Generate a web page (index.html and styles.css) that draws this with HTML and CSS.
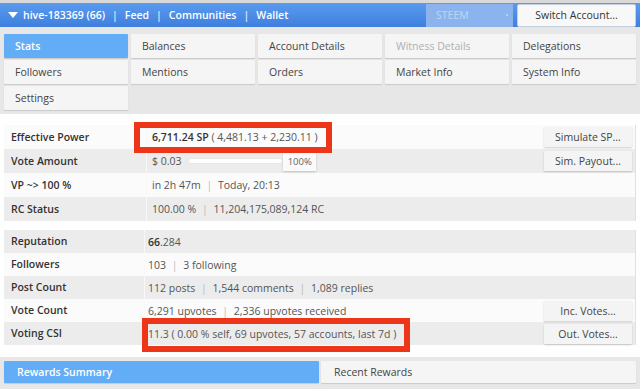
FILE: index.html
```html
<!DOCTYPE html>
<html>
<head>
  <meta charset="utf-8">
  <meta name="viewport" content="width=device-width">
  <title>hive-183369 - Stats</title>
  <link rel="stylesheet" href="styles.css">
</head>
<body>
  <header class="bar">
    <div class="bar-links">
      <svg class="caret" width="10" height="6" viewBox="0 0 10 6"><path d="M0 0 L10 0 L5 6 Z" fill="#fff"/></svg>
      <span>hive-183369 (66)</span><span class="sep">|</span>
      <span>Feed</span><span class="sep">|</span>
      <span>Communities</span><span class="sep">|</span>
      <span>Wallet</span>
    </div>
    <div class="chain">STEEM <span class="dot"></span></div>
    <div class="switch">Switch Account...</div>
  </header>

  <nav class="tabs">
    <div class="tab active">Stats</div>
    <div class="tab">Balances</div>
    <div class="tab">Account Details</div>
    <div class="tab disabled">Witness Details</div>
    <div class="tab">Delegations</div>
    <div class="tab">Followers</div>
    <div class="tab">Mentions</div>
    <div class="tab">Orders</div>
    <div class="tab">Market Info</div>
    <div class="tab">System Info</div>
    <div class="tab">Settings</div>
  </nav>

  <section class="stats">
    <div class="table first">
      <div class="row">
        <div class="label">Effective Power</div>
        <div class="value"><b>6,711.24 SP</b> ( 4,481.13 + 2,230.11 )</div>
        <div class="act"><button>Simulate SP...</button></div>
      </div>
      <div class="row alt">
        <div class="label">Vote Amount</div>
        <div class="value">$ 0.03 <span class="track"></span><span class="thumb">100%</span></div>
        <div class="act"><button>Sim. Payout...</button></div>
      </div>
      <div class="row">
        <div class="label">VP ~&gt; 100 %</div>
        <div class="value">in 2h 47m <span class="pipe">|</span> Today, 20:13</div>
        <div class="act"></div>
      </div>
      <div class="row alt">
        <div class="label">RC Status</div>
        <div class="value">100.00 % <span class="pipe">|</span> 11,204,175,089,124 RC</div>
        <div class="act"></div>
      </div>
    </div>

    <div class="table second">
      <div class="row alt">
        <div class="label">Reputation</div>
        <div class="value"><b>66</b>.284</div>
        <div class="act"></div>
      </div>
      <div class="row">
        <div class="label">Followers</div>
        <div class="value">103 <span class="pipe">|</span> 3 following</div>
        <div class="act"></div>
      </div>
      <div class="row alt">
        <div class="label">Post Count</div>
        <div class="value">112 posts <span class="pipe">|</span> 1,544 comments <span class="pipe">|</span> 1,089 replies</div>
        <div class="act"></div>
      </div>
      <div class="row">
        <div class="label">Vote Count</div>
        <div class="value">6,291 upvotes <span class="pipe">|</span> 2,336 upvotes received</div>
        <div class="act"><button>Inc. Votes...</button></div>
      </div>
      <div class="row alt">
        <div class="label">Voting CSI</div>
        <div class="value">11.3 ( 0.00 % self, 69 upvotes, 57 accounts, last 7d )</div>
        <div class="act"><button>Out. Votes...</button></div>
      </div>
    </div>
  </section>

  <nav class="tabs bottom">
    <div class="tab active">Rewards Summary</div>
    <div class="tab">Recent Rewards</div>
  </nav>

  <!-- red annotation boxes drawn over the screenshot -->
  <div class="mark mark-sp"></div>
  <div class="mark mark-csi"></div>
</body>
</html>
```

FILE: styles.css
```css
body {
  font-family: "Open Sans", "DejaVu Sans", sans-serif;
  font-size: 10.5px;
  color: #555;
  margin: 0;
  padding: 3px 0 0 0;
  background: #fff;
  position: relative;
  height: 388px;
  overflow: hidden;
  box-shadow: inset 0 3px 0 #d9d9d9;
}
.bar {
  display: flex;
  align-items: center;
  height: 24px;
  background: linear-gradient(#5a9bef, #3f7fde);
  color: #fff;
  font-weight: 600;
  padding: 0 4px 0 8px;
}
.bar-links {
  flex: 1;
  display: flex;
  align-items: center;
}
.caret {
  margin-right: 5px;
}
.sep {
  padding: 0 7px;
  opacity: 0.85;
}
.chain {
  width: 72px;
  height: 23px;
  line-height: 23px;
  padding: 0 5px 0 10px;
  background: #8bb4ee;
  color: #c0d5f4;
  font-weight: 400;
  display: flex;
  align-items: center;
  justify-content: space-between;
  margin-right: 4px;
}
.dot {
  width: 2px;
  height: 2px;
  border-radius: 1px;
  background: #c8dbf6;
}
.switch {
  width: 117px;
  height: 21px;
  line-height: 21px;
  text-align: center;
  background: #f8f8f8;
  border: 1px solid #c4cfdd;
  border-radius: 2px;
  color: #333;
  font-weight: 400;
}
.tabs {
  display: grid;
  grid-template-columns: repeat(5, 1fr);
  column-gap: 3px;
  row-gap: 2px;
  background: #e7e7e7;
  padding: 7px 4px 4px 4px;
}
.tab {
  height: 24px;
  line-height: 24px;
  padding-left: 11px;
  background: #f5f5f5;
  color: #444;
  box-shadow: 0 1px 1px rgba(0, 0, 0, 0.13);
  border-radius: 1px;
}
.tab.active {
  background: #63adf6;
  color: #fff;
  font-weight: 600;
}
.tab.disabled {
  color: #b0b0b0;
}
.tabs.bottom {
  grid-template-columns: 1fr 1fr;
  column-gap: 2px;
  padding: 4px 4px 6px 4px;
  margin-top: 12px;
}
.tabs.bottom .tab {
  height: 22px;
  line-height: 22px;
  padding-left: 13px;
}
.stats {
  padding: 11px 4px 0 4px;
}
.table {
  border-right: 1px solid #e0e0e0;
}
.table.second {
  margin-top: 9px;
}
.row {
  display: grid;
  grid-template-columns: 143px 1fr 96px;
  height: 24px;
  align-items: center;
  background: #fbfbfb;
}
.second .row {
  grid-template-columns: 141px 1fr 96px;
  height: 23px;
}
.row.alt {
  background: #ececec;
}
.label {
  height: 100%;
  line-height: 24px;
  padding-left: 7px;
  font-weight: 600;
  color: #333;
  border-right: 1px solid #f8f8f8;
}
.second .label {
  line-height: 23px;
}
.value {
  padding-left: 5px;
  display: flex;
  align-items: center;
  white-space: pre;
}
.second .value {
  padding-left: 3px;
}
.value b {
  font-weight: 600;
  color: #333;
}
.pipe {
  color: #bbb;
  padding: 0 3px;
}
.track {
  display: inline-block;
  width: 93px;
  height: 4px;
  margin-left: 4px;
  background: #fff;
  border: 1px solid #e6e6e6;
  border-radius: 3px;
}
.thumb {
  display: inline-block;
  width: 33px;
  height: 19px;
  line-height: 19px;
  text-align: center;
  background: #fafafa;
  box-shadow: 0 1px 2px rgba(0, 0, 0, 0.18);
  font-size: 9.5px;
  color: #666;
}
.act {
  display: flex;
  justify-content: flex-end;
  padding-right: 3px;
}
.act button {
  width: 88px;
  height: 20px;
  padding: 0;
  border: 0;
  border-radius: 1px;
  background: #f4f4f4;
  box-shadow: 0 1px 2px rgba(0, 0, 0, 0.18);
  font-family: inherit;
  font-size: 10.5px;
  color: #444;
}
.mark {
  position: absolute;
  border: 6px solid #ec3519;
  box-sizing: border-box;
}
.mark-sp {
  left: 134px;
  top: 122px;
  width: 198px;
  height: 31px;
}
.mark-csi {
  left: 142px;
  top: 318px;
  width: 268px;
  height: 34px;
}
```
